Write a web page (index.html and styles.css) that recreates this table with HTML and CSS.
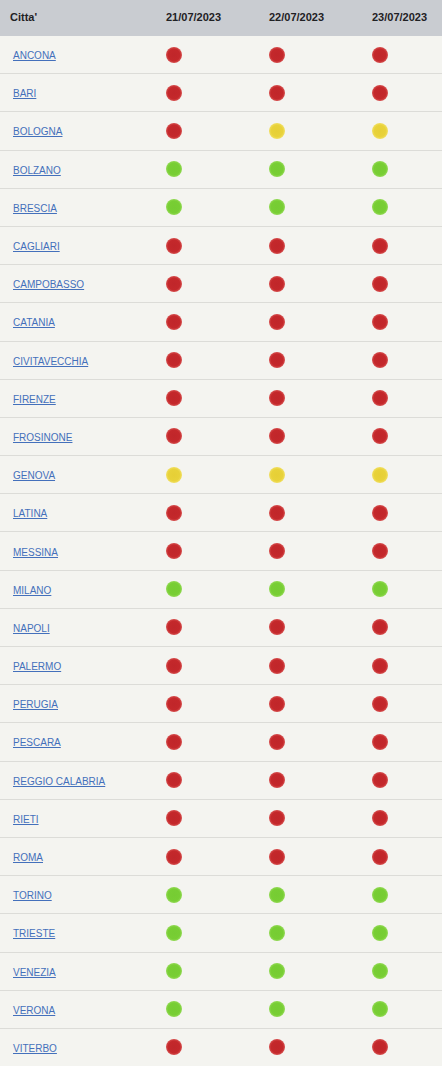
FILE: index.html
```html
<!DOCTYPE html>
<html lang="it">
<head>
<meta charset="utf-8">
<title>Città</title>
<link rel="stylesheet" href="styles.css">
</head>
<body>
<div class="table">
  <div class="row head">
    <div class="cell">Citta'</div>
    <div class="cell">21/07/2023</div>
    <div class="cell">22/07/2023</div>
    <div class="cell">23/07/2023</div>
  </div>
  <div class="row"><div class="cell"><a href="#">ANCONA</a></div><div class="cell"><span class="dot r"></span></div><div class="cell"><span class="dot r"></span></div><div class="cell"><span class="dot r"></span></div></div>
  <div class="row"><div class="cell"><a href="#">BARI</a></div><div class="cell"><span class="dot r"></span></div><div class="cell"><span class="dot r"></span></div><div class="cell"><span class="dot r"></span></div></div>
  <div class="row"><div class="cell"><a href="#">BOLOGNA</a></div><div class="cell"><span class="dot r"></span></div><div class="cell"><span class="dot y"></span></div><div class="cell"><span class="dot y"></span></div></div>
  <div class="row"><div class="cell"><a href="#">BOLZANO</a></div><div class="cell"><span class="dot g"></span></div><div class="cell"><span class="dot g"></span></div><div class="cell"><span class="dot g"></span></div></div>
  <div class="row"><div class="cell"><a href="#">BRESCIA</a></div><div class="cell"><span class="dot g"></span></div><div class="cell"><span class="dot g"></span></div><div class="cell"><span class="dot g"></span></div></div>
  <div class="row"><div class="cell"><a href="#">CAGLIARI</a></div><div class="cell"><span class="dot r"></span></div><div class="cell"><span class="dot r"></span></div><div class="cell"><span class="dot r"></span></div></div>
  <div class="row"><div class="cell"><a href="#">CAMPOBASSO</a></div><div class="cell"><span class="dot r"></span></div><div class="cell"><span class="dot r"></span></div><div class="cell"><span class="dot r"></span></div></div>
  <div class="row"><div class="cell"><a href="#">CATANIA</a></div><div class="cell"><span class="dot r"></span></div><div class="cell"><span class="dot r"></span></div><div class="cell"><span class="dot r"></span></div></div>
  <div class="row"><div class="cell"><a href="#">CIVITAVECCHIA</a></div><div class="cell"><span class="dot r"></span></div><div class="cell"><span class="dot r"></span></div><div class="cell"><span class="dot r"></span></div></div>
  <div class="row"><div class="cell"><a href="#">FIRENZE</a></div><div class="cell"><span class="dot r"></span></div><div class="cell"><span class="dot r"></span></div><div class="cell"><span class="dot r"></span></div></div>
  <div class="row"><div class="cell"><a href="#">FROSINONE</a></div><div class="cell"><span class="dot r"></span></div><div class="cell"><span class="dot r"></span></div><div class="cell"><span class="dot r"></span></div></div>
  <div class="row"><div class="cell"><a href="#">GENOVA</a></div><div class="cell"><span class="dot y"></span></div><div class="cell"><span class="dot y"></span></div><div class="cell"><span class="dot y"></span></div></div>
  <div class="row"><div class="cell"><a href="#">LATINA</a></div><div class="cell"><span class="dot r"></span></div><div class="cell"><span class="dot r"></span></div><div class="cell"><span class="dot r"></span></div></div>
  <div class="row"><div class="cell"><a href="#">MESSINA</a></div><div class="cell"><span class="dot r"></span></div><div class="cell"><span class="dot r"></span></div><div class="cell"><span class="dot r"></span></div></div>
  <div class="row"><div class="cell"><a href="#">MILANO</a></div><div class="cell"><span class="dot g"></span></div><div class="cell"><span class="dot g"></span></div><div class="cell"><span class="dot g"></span></div></div>
  <div class="row"><div class="cell"><a href="#">NAPOLI</a></div><div class="cell"><span class="dot r"></span></div><div class="cell"><span class="dot r"></span></div><div class="cell"><span class="dot r"></span></div></div>
  <div class="row"><div class="cell"><a href="#">PALERMO</a></div><div class="cell"><span class="dot r"></span></div><div class="cell"><span class="dot r"></span></div><div class="cell"><span class="dot r"></span></div></div>
  <div class="row"><div class="cell"><a href="#">PERUGIA</a></div><div class="cell"><span class="dot r"></span></div><div class="cell"><span class="dot r"></span></div><div class="cell"><span class="dot r"></span></div></div>
  <div class="row"><div class="cell"><a href="#">PESCARA</a></div><div class="cell"><span class="dot r"></span></div><div class="cell"><span class="dot r"></span></div><div class="cell"><span class="dot r"></span></div></div>
  <div class="row"><div class="cell"><a href="#">REGGIO CALABRIA</a></div><div class="cell"><span class="dot r"></span></div><div class="cell"><span class="dot r"></span></div><div class="cell"><span class="dot r"></span></div></div>
  <div class="row"><div class="cell"><a href="#">RIETI</a></div><div class="cell"><span class="dot r"></span></div><div class="cell"><span class="dot r"></span></div><div class="cell"><span class="dot r"></span></div></div>
  <div class="row"><div class="cell"><a href="#">ROMA</a></div><div class="cell"><span class="dot r"></span></div><div class="cell"><span class="dot r"></span></div><div class="cell"><span class="dot r"></span></div></div>
  <div class="row"><div class="cell"><a href="#">TORINO</a></div><div class="cell"><span class="dot g"></span></div><div class="cell"><span class="dot g"></span></div><div class="cell"><span class="dot g"></span></div></div>
  <div class="row"><div class="cell"><a href="#">TRIESTE</a></div><div class="cell"><span class="dot g"></span></div><div class="cell"><span class="dot g"></span></div><div class="cell"><span class="dot g"></span></div></div>
  <div class="row"><div class="cell"><a href="#">VENEZIA</a></div><div class="cell"><span class="dot g"></span></div><div class="cell"><span class="dot g"></span></div><div class="cell"><span class="dot g"></span></div></div>
  <div class="row"><div class="cell"><a href="#">VERONA</a></div><div class="cell"><span class="dot g"></span></div><div class="cell"><span class="dot g"></span></div><div class="cell"><span class="dot g"></span></div></div>
  <div class="row"><div class="cell"><a href="#">VITERBO</a></div><div class="cell"><span class="dot r"></span></div><div class="cell"><span class="dot r"></span></div><div class="cell"><span class="dot r"></span></div></div>
</div>
</body>
</html>
```
FILE: styles.css
```css
html, body {
  margin: 0;
  padding: 0;
  background: #f4f4f0;
  font-family: "Liberation Sans", Arial, sans-serif;
}
.table {
  display: flex;
  flex-direction: column;
}
.row {
  display: grid;
  grid-template-columns: 156px 103px 103px 1fr;
  height: 37.2px;
  border-bottom: 1px solid #dcdcd8;
  align-items: center;
}
.row.head {
  height: 35px;
  border-bottom: 0;
  background: #c9ccd1;
  font-weight: bold;
  font-size: 11px;
  color: #1f2124;
  padding-bottom: 1px;
}
.row.head .cell { padding-bottom: 2px; }
.cell {
  padding-left: 10px;
  display: flex;
  align-items: center;
}
.cell a {
  font-size: 10px;
  color: #4470bb;
  text-decoration: underline;
  text-underline-offset: 1px;
  padding-left: 3px;
  padding-top: 2px;
}
.dot {
  display: block;
  width: 16px;
  height: 16px;
  border-radius: 50%;
  margin-left: 0;
}
.dot.r {
  background: radial-gradient(circle, #c0262a 0, #c4282b 52%, #d44a4a 68%, rgba(230, 110, 110, 0.5) 88%, rgba(240, 160, 160, 0) 100%);
}
.dot.g {
  background: radial-gradient(circle, #76cc33 0, #78ce34 52%, #8fd850 68%, rgba(170, 230, 120, 0.5) 88%, rgba(200, 240, 170, 0) 100%);
}
.dot.y {
  background: radial-gradient(circle, #e6cf36 0, #e8d23a 50%, #efdc58 66%, rgba(250, 238, 140, 0.6) 86%, rgba(252, 246, 200, 0) 100%);
}
```
